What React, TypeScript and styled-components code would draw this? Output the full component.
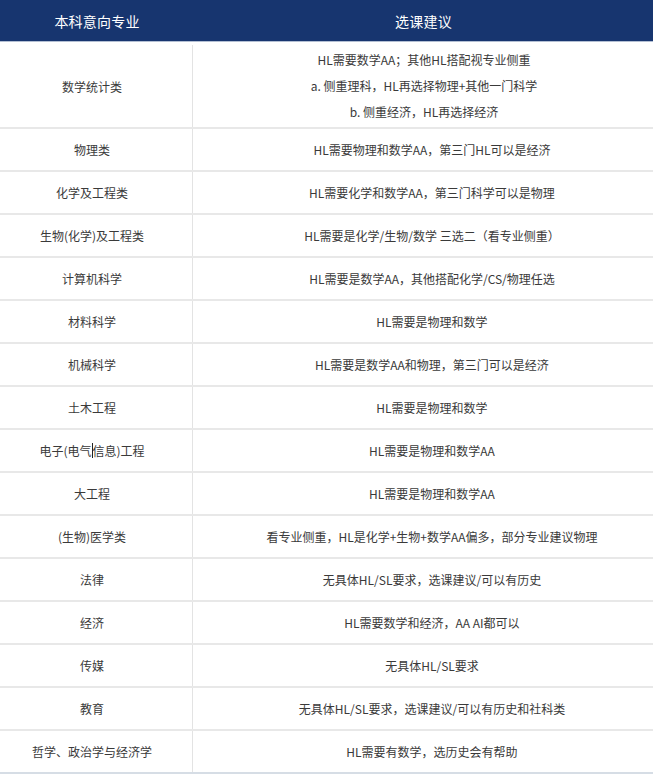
import React from "react";
import styled, { createGlobalStyle } from "styled-components";

const GlobalStyle = createGlobalStyle`
  html, body {
    margin: 0;
    padding: 0;
    background: #ffffff;
  }
  body {
    font-family: "Noto Sans CJK SC", "Noto Sans", sans-serif;
    -webkit-font-smoothing: antialiased;
  }
`;

const Table = styled.div`
  width: 653px;
  display: flex;
  flex-direction: column;
`;

const HeaderRow = styled.div`
  display: grid;
  grid-template-columns: 194px 1fr;
  height: 41px;
  background: #17356f;
  border-bottom: 1px solid #b3bfd3;
`;

const HeaderCell = styled.div`
  display: flex;
  align-items: center;
  justify-content: center;
  color: #ffffff;
  font-size: 14px;
  font-weight: 400;
  letter-spacing: 0.2px;
`;

const Body = styled.div`
  display: flex;
  flex-direction: column;
  padding-top: 3px;
`;

const Row = styled.div<{ $tall?: boolean; $last?: boolean }>`
  display: grid;
  grid-template-columns: 193px 1fr;
  height: ${(p) => (p.$tall ? 82 : 41)}px;
  border-bottom: 2px solid ${(p) => (p.$last ? "#d6dde5" : "#e8e8e8")};
`;

const LabelCell = styled.div`
  display: flex;
  align-items: center;
  justify-content: center;
  padding-right: 8px;
  border-right: 1px solid #e3e3e3;
  color: #3a3a3a;
  font-size: 12px;
  text-align: center;
`;

const AdviceCell = styled.div<{ $single?: boolean }>`
  display: flex;
  flex-direction: column;
  align-items: center;
  justify-content: center;
  padding-left: ${(p) => (p.$single ? 18 : 2)}px;
  color: #3a3a3a;
  font-size: 12px;
  text-align: center;
`;

const Line = styled.div`
  line-height: 26px;
  white-space: nowrap;
`;

const Caret = styled.span`
  display: inline-block;
  width: 1px;
  height: 15px;
  background: #222222;
  vertical-align: -3px;
`;

type RowData = { label: React.ReactNode; advice: string[] };

const rows: RowData[] = [
  {
    label: "数学统计类",
    advice: [
      "HL需要数学AA；其他HL搭配视专业侧重",
      "a. 侧重理科，HL再选择物理+其他一门科学",
      "b. 侧重经济，HL再选择经济",
    ],
  },
  { label: "物理类", advice: ["HL需要物理和数学AA，第三门HL可以是经济"] },
  { label: "化学及工程类", advice: ["HL需要化学和数学AA，第三门科学可以是物理"] },
  { label: "生物(化学)及工程类", advice: ["HL需要是化学/生物/数学 三选二（看专业侧重）"] },
  { label: "计算机科学", advice: ["HL需要是数学AA，其他搭配化学/CS/物理任选"] },
  { label: "材料科学", advice: ["HL需要是物理和数学"] },
  { label: "机械科学", advice: ["HL需要是数学AA和物理，第三门可以是经济"] },
  { label: "土木工程", advice: ["HL需要是物理和数学"] },
  {
    label: (
      <>
        电子(电气<Caret />信息)工程
      </>
    ),
    advice: ["HL需要是物理和数学AA"],
  },
  { label: "大工程", advice: ["HL需要是物理和数学AA"] },
  { label: "(生物)医学类", advice: ["看专业侧重，HL是化学+生物+数学AA偏多，部分专业建议物理"] },
  { label: "法律", advice: ["无具体HL/SL要求，选课建议/可以有历史"] },
  { label: "经济", advice: ["HL需要数学和经济，AA AI都可以"] },
  { label: "传媒", advice: ["无具体HL/SL要求"] },
  { label: "教育", advice: ["无具体HL/SL要求，选课建议/可以有历史和社科类"] },
  { label: "哲学、政治学与经济学", advice: ["HL需要有数学，选历史会有帮助"] },
];

export default function App() {
  return (
    <>
      <GlobalStyle />
      <Table>
        <HeaderRow>
          <HeaderCell>本科意向专业</HeaderCell>
          <HeaderCell>选课建议</HeaderCell>
        </HeaderRow>
        <Body>
          {rows.map((r, i) => (
            <Row key={i} $tall={r.advice.length > 1} $last={i === rows.length - 1}>
              <LabelCell>{r.label}</LabelCell>
              <AdviceCell $single={r.advice.length === 1}>
                {r.advice.map((a, j) => (
                  <Line key={j}>{a}</Line>
                ))}
              </AdviceCell>
            </Row>
          ))}
        </Body>
      </Table>
    </>
  );
}
